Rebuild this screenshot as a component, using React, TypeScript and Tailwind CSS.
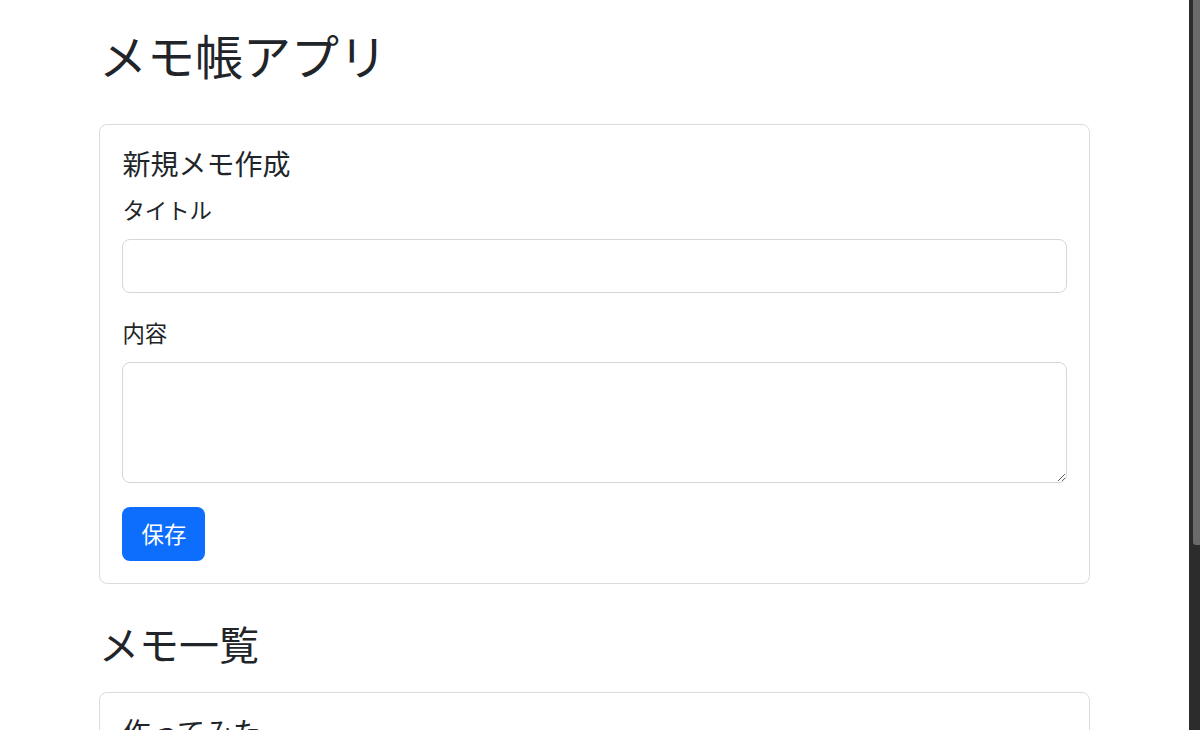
import React from "react";

export default function App() {
  return (
    <div
      className="flex h-[730px] w-[1200px] overflow-hidden bg-white text-[#212529]"
      style={{ fontFamily: '"Noto Sans CJK JP", "Noto Sans", sans-serif' }}
    >
      <div className="h-full flex-1 overflow-hidden">
        <div className="mx-auto w-[991px] pt-[26px]">
          <h1 className="mb-[40px] text-[48px] font-normal leading-[1.2]">メモ帳アプリ</h1>

          <div className="rounded-[8px] border border-[#dcdcdc] p-[22.4px]">
            <h5 className="mb-[11px] text-[28px] font-normal leading-[1.2]">新規メモ作成</h5>
            <label className="mb-[13px] block text-[22.4px] leading-[34px]">タイトル</label>
            <input
              type="text"
              className="mb-[22px] block h-[54px] w-full rounded-[8px] border border-[#d3d7db] bg-white px-[16px] text-[22.4px] outline-none"
            />
            <label className="mb-[13px] block text-[22.4px] leading-[34px]">内容</label>
            <textarea
              rows={3}
              className="mb-[24px] block h-[121px] w-full resize-y rounded-[8px] border border-[#d3d7db] bg-white px-[16px] py-[8px] text-[22.4px] outline-none"
            />
            <button className="flex h-[54px] w-[83px] items-center justify-center rounded-[8px] bg-[#0d6efd] text-[22.4px] leading-none text-white">
              保存
            </button>
          </div>

          <h2 className="mb-[25px] mt-[35px] text-[40px] font-normal leading-[1.2]">メモ一覧</h2>

          <div className="rounded-[8px] border border-[#dcdcdc] p-[22.4px]">
            <h5 className="mb-[11px] text-[28px] font-normal leading-[1.2]">作ってみた</h5>
            <p className="mb-[16px] text-[22.4px] leading-[1.5]">メモ帳アプリを作ってみました。</p>
            <button className="flex h-[54px] w-[83px] items-center justify-center rounded-[8px] bg-[#dc3545] text-[22.4px] leading-none text-white">
              削除
            </button>
          </div>
        </div>
      </div>
      <div className="flex h-full w-[11px] shrink-0 bg-[#2c2c2c]">
        <div className="ml-[4px] h-[545px] w-[7px] rounded-bl-[3px] bg-[#6a6a6a]" />
      </div>
    </div>
  );
}
